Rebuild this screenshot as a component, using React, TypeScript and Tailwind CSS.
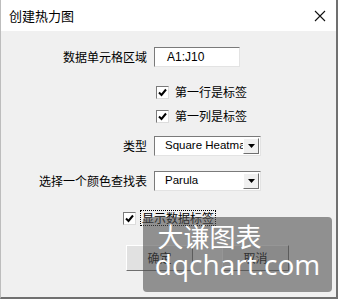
import React from 'react';

const cjk = { fontFamily: '"Noto Sans CJK SC", "Noto Sans", sans-serif' };
const latin = { fontFamily: '"Liberation Sans", "Noto Sans CJK SC", sans-serif' };

const CheckBox = () => (
  <span className="inline-flex w-[13px] h-[13px] bg-white border border-t-[#7a7a7a] border-l-[#7a7a7a] border-r-[#dcdcdc] border-b-[#dcdcdc] items-center justify-center">
    <svg width="9" height="9" viewBox="0 0 9 9">
      <path d="M1 4.5 L3.5 7 L8 1.5" stroke="#000" strokeWidth="2" fill="none" />
    </svg>
  </span>
);

const Select = ({ value }: { value: string }) => (
  <div className="w-[107px] h-[20px] bg-white border border-t-[#7a7a7a] border-l-[#7a7a7a] border-r-[#e3e3e3] border-b-[#e3e3e3] flex items-center overflow-hidden">
    <span className="flex-1 pl-[10px] text-[11.5px] text-black whitespace-nowrap overflow-hidden" style={latin}>
      {value}
    </span>
    <span className="w-[16px] h-[16px] mr-[1px] bg-[#f0f0f0] border border-t-white border-l-white border-r-[#6f6f6f] border-b-[#6f6f6f] flex items-center justify-center shrink-0">
      <svg width="7" height="4" viewBox="0 0 7 4">
        <path d="M0 0 H7 L3.5 4 Z" fill="#000" />
      </svg>
    </span>
  </div>
);

const Row = ({ label, children, className }: { label?: string; children: React.ReactNode; className?: string }) => (
  <div className={`flex items-center ${className ?? ''}`}>
    <div className="w-[147px] text-right text-[12px] text-black pr-[1px]" style={cjk}>
      {label}
    </div>
    <div className="ml-[6px]">{children}</div>
  </div>
);

export default function App() {
  return (
    <div className="w-[338px] h-[299px] flex flex-col bg-white border-r-2 border-b-2 border-r-[#707070] border-b-[#707070] border-l border-l-[#bdbdbd]">
      {/* title bar */}
      <div className="h-[31px] flex items-center justify-between pl-[8px] pr-[10px] shrink-0">
        <span className="text-[13px] text-black" style={cjk}>创建热力图</span>
        <svg width="12" height="12" viewBox="0 0 12 12">
          <path d="M1 1 L11 11 M11 1 L1 11" stroke="#111" strokeWidth="1.1" />
        </svg>
      </div>

      <div className="flex-1 bg-[#f0f0f0] relative flex flex-col">
        <Row label="数据单元格区域" className="mt-[16px] h-[20px]">
          <div className="w-[86px] h-[20px] bg-white border border-t-[#7a7a7a] border-l-[#7a7a7a] border-r-[#e3e3e3] border-b-[#e3e3e3] flex items-center pl-[12px] text-[12px] text-black" style={latin}>
            A1:J10
          </div>
        </Row>

        <Row className="mt-[18px] h-[14px]">
          <div className="flex items-center gap-[6px] ml-[2px]">
            <CheckBox />
            <span className="text-[12px] text-black" style={cjk}>第一行是标签</span>
          </div>
        </Row>

        <Row className="mt-[10px] h-[14px]">
          <div className="flex items-center gap-[6px] ml-[2px]">
            <CheckBox />
            <span className="text-[12px] text-black" style={cjk}>第一列是标签</span>
          </div>
        </Row>

        <Row label="类型" className="mt-[13px] h-[20px]">
          <Select value="Square Heatmap" />
        </Row>

        <Row label="选择一个颜色查找表" className="mt-[15px] h-[20px]">
          <Select value="Parula" />
        </Row>

        <div className="mt-[19px] h-[16px] flex items-center pl-[122px] gap-[4px]">
          <CheckBox />
          <span className="text-[12px] text-black border border-dotted border-black px-[1px] leading-[14px]" style={cjk}>
            显示数据标签
          </span>
        </div>

        <div className="mt-[19px] flex pl-[125px] gap-[29px]">
          <button className="w-[67px] h-[26px] bg-[#e1e1e1] border border-t-white border-l-white border-r-[#6f6f6f] border-b-[#6f6f6f] text-[12px] text-black" style={cjk}>
            确定
          </button>
          <button className="w-[67px] h-[26px] bg-[#e1e1e1] border border-t-white border-l-white border-r-[#6f6f6f] border-b-[#6f6f6f] text-[12px] text-black" style={cjk}>
            取消
          </button>
        </div>

        {/* watermark */}
        <div className="absolute left-[142px] top-[186px] w-[189px] h-[75px] rounded-[4px] bg-[#505050]/60 flex flex-col items-center pointer-events-none">
          <span className="text-[26px] leading-[28px] text-white mt-[5px] -ml-[56px]" style={cjk}>大谦图表</span>
          <span className="text-[28px] leading-[32px] text-white -mt-[2px]" style={{ fontFamily: '"Open Sans", "Noto Sans", sans-serif' }}>dqchart.com</span>
        </div>
      </div>
    </div>
  );
}
